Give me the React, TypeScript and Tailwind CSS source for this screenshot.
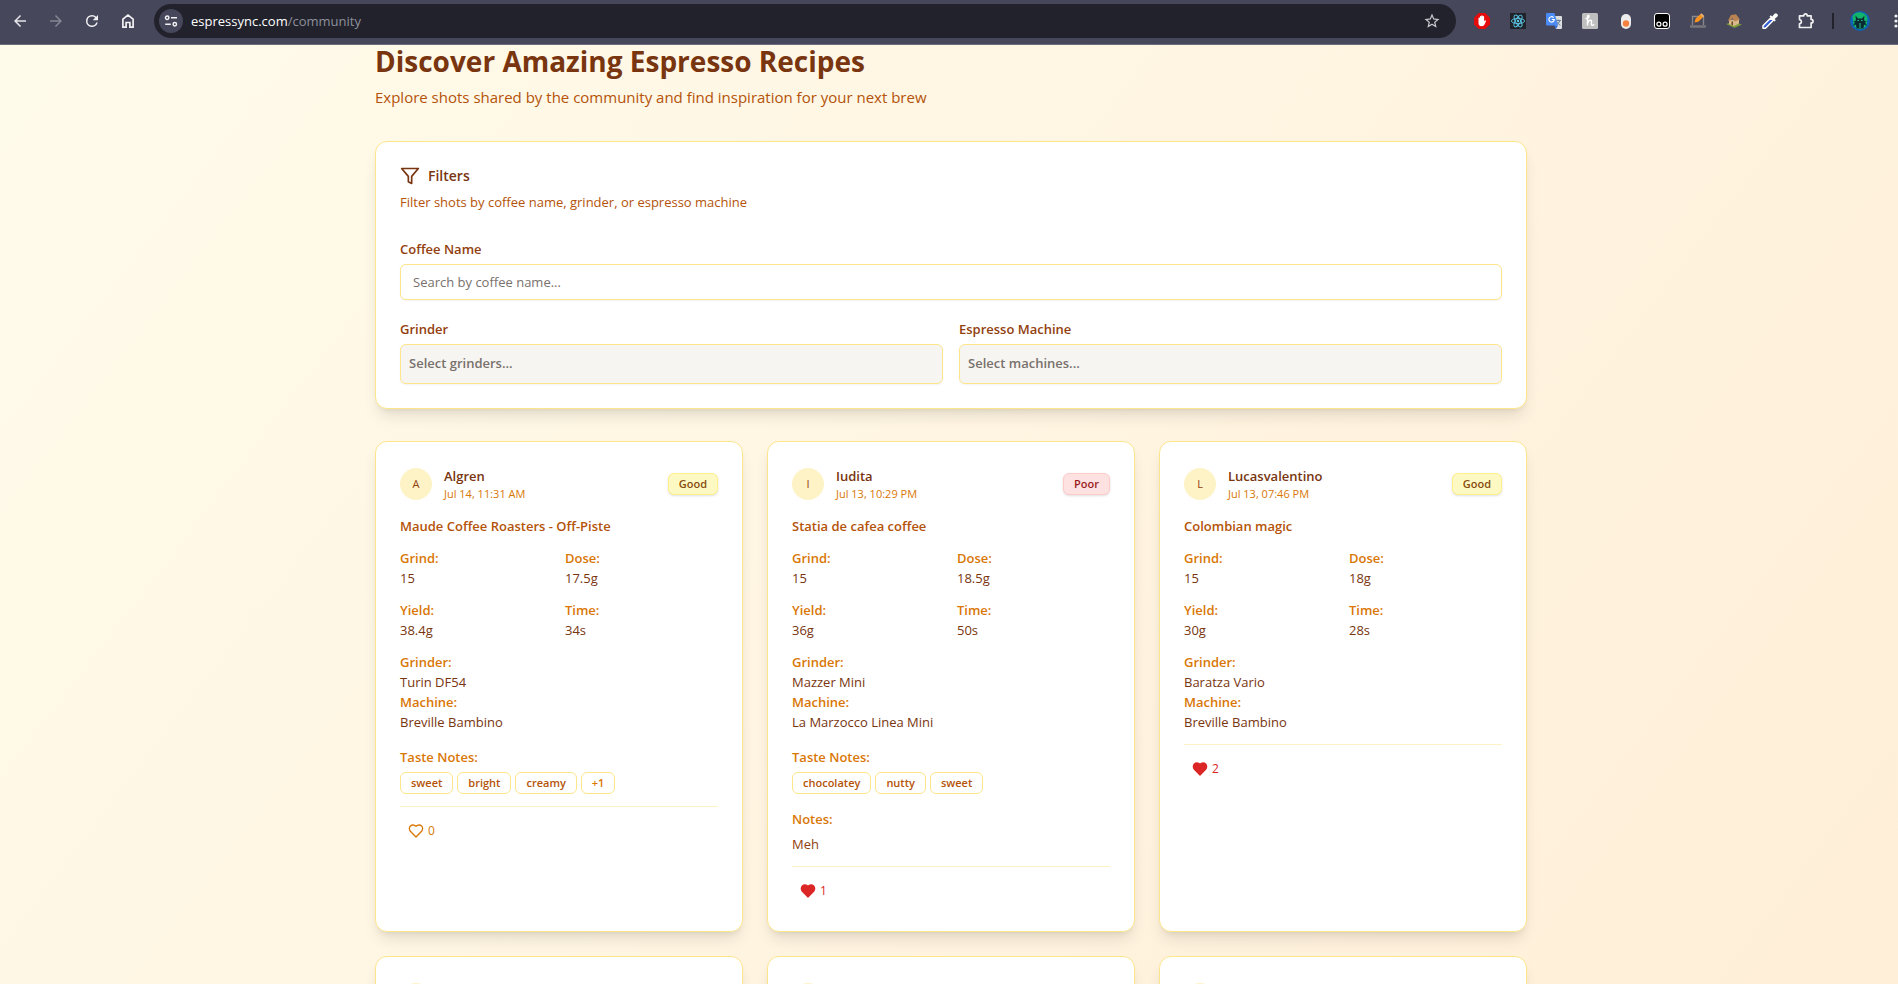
import { useState } from "react";
import type { ReactNode } from "react";

type Shot = {
  user: string;
  date: string;
  rating: "Good" | "Poor";
  coffee: string;
  stats: [string, string][];
  gear: [string, string][];
  tastes: string[];
  more?: string;
  notes?: string;
  likes: number;
  liked: boolean;
};

const shots: Shot[] = [
  {
    user: "Algren",
    date: "Jul 14, 11:31 AM",
    rating: "Good",
    coffee: "Maude Coffee Roasters - Off-Piste",
    stats: [["Grind:", "15"], ["Dose:", "17.5g"], ["Yield:", "38.4g"], ["Time:", "34s"]],
    gear: [["Grinder:", "Turin DF54"], ["Machine:", "Breville Bambino"]],
    tastes: ["sweet", "bright", "creamy"],
    more: "+1",
    likes: 0,
    liked: false,
  },
  {
    user: "Iudita",
    date: "Jul 13, 10:29 PM",
    rating: "Poor",
    coffee: "Statia de cafea coffee",
    stats: [["Grind:", "15"], ["Dose:", "18.5g"], ["Yield:", "36g"], ["Time:", "50s"]],
    gear: [["Grinder:", "Mazzer Mini"], ["Machine:", "La Marzocco Linea Mini"]],
    tastes: ["chocolatey", "nutty", "sweet"],
    notes: "Meh",
    likes: 1,
    liked: true,
  },
  {
    user: "Lucasvalentino",
    date: "Jul 13, 07:46 PM",
    rating: "Good",
    coffee: "Colombian magic",
    stats: [["Grind:", "15"], ["Dose:", "18g"], ["Yield:", "30g"], ["Time:", "28s"]],
    gear: [["Grinder:", "Baratza Vario"], ["Machine:", "Breville Bambino"]],
    tastes: [],
    likes: 2,
    liked: true,
  },
];

const loadingCards = [1, 2, 3, 4, 5, 6, 7, 8, 9];

const ratingStyles = {
  Good: "border-[#fef08a] bg-[#fef9c3] text-[#854d0e]",
  Poor: "border-[#fecaca] bg-[#fee2e2] text-[#991b1b]",
};

function BarButton({ label, children }: { label: string; children: ReactNode }) {
  return (
    <button type="button" aria-label={label} className="flex h-9 w-9 shrink-0 items-center justify-center">
      {children}
    </button>
  );
}

function BrowserBar() {
  return (
    <header className="shrink-0 overflow-hidden border-b border-[#6b6c7e] bg-[#46475a]">
      <div className="-mr-4 flex h-11 items-center pb-0.5 pl-0.5">
        <BarButton label="Back">
          <svg viewBox="0 0 24 24" className="h-[18px] w-[18px] fill-[#e6e6ea]">
            <path d="M20 11H7.83l5.59-5.59L12 4l-8 8 8 8 1.41-1.41L7.83 13H20v-2z" />
          </svg>
        </BarButton>
        <BarButton label="Forward">
          <svg viewBox="0 0 24 24" className="h-[18px] w-[18px] fill-[#858693]">
            <path d="M4 11h12.17l-5.59-5.59L12 4l8 8-8 8-1.41-1.41L16.17 13H4v-2z" />
          </svg>
        </BarButton>
        <BarButton label="Reload">
          <svg viewBox="0 0 24 24" className="h-[18px] w-[18px] fill-[#f1f1f3]">
            <path d="M17.65 6.35A7.96 7.96 0 0 0 12 4a8 8 0 1 0 7.73 10h-2.08A6 6 0 1 1 12 6c1.66 0 3.14.69 4.22 1.78L13 11h7V4l-2.35 2.35z" />
          </svg>
        </BarButton>
        <BarButton label="Home">
          <svg viewBox="0 0 18 18" className="h-[18px] w-[18px] fill-none stroke-[#f1f1f3]" strokeWidth="1.7">
            <path d="M3.9 15.1V7.2L9 3.1l5.1 4.1v7.9h-3.2v-4.6H7.1v4.6Z" />
          </svg>
        </BarButton>
        <div className="ml-2 mr-2 flex h-[34px] min-w-0 flex-1 items-center rounded-full bg-[#22222c] pl-[5px] pr-[15px]">
          <button
            type="button"
            aria-label="Site information"
            className="flex h-6 w-6 shrink-0 items-center justify-center rounded-full bg-[#46475a]"
          >
            <svg viewBox="0 0 16 16" className="h-4 w-4 fill-none stroke-[#f1f1f3]" strokeWidth="1.5">
              <circle cx="4.2" cy="4.8" r="1.7" />
              <path d="M8 4.8h6M2.2 11.2h5.6" />
              <circle cx="11.8" cy="11.2" r="1.7" />
            </svg>
          </button>
          <p className="min-w-0 flex-1 truncate pl-2 text-[13px] leading-5 text-[#8f909b]">
            <span className="text-white">espressync.com</span>/community
          </p>
          <button type="button" aria-label="Bookmark this page" className="flex h-[18px] w-[18px] items-center justify-center">
            <svg viewBox="0 0 24 24" className="h-[18px] w-[18px] fill-[#c9c9cf]">
              <path d="M22 9.24l-7.19-.62L12 2 9.19 8.63 2 9.24l5.46 4.73L5.82 21 12 17.27 18.18 21l-1.63-7.03L22 9.24zM12 15.4l-3.76 2.27 1-4.28-3.32-2.88 4.38-.38L12 6.1l1.71 4.04 4.38.38-3.32 2.88 1 4.28L12 15.4z" />
            </svg>
          </button>
        </div>
        <BarButton label="Ad blocker">
          <svg viewBox="0 0 16 16" className="h-4 w-4">
            <path d="M4.7 0h6.6L16 4.7v6.6L11.3 16H4.7L0 11.3V4.7Z" fill="#e40d0d" />
            <path
              d="M4.5 8.2V5.2a.7.7 0 0 1 1.4 0V3.600a.7.7 0 0 1 1.4 0V2.900a.7.7 0 0 1 1.4 0v.8a.7.7 0 0 1 1.4 0v4.8l.6-1a.8.8 0 0 1 1.3.8l-1.5 3.2c-.6 1.2-1.4 1.7-2.8 1.7-2 0-3.2-1.2-3.2-3Z"
              fill="#fff"
            />
          </svg>
        </BarButton>
        <BarButton label="React tools">
          <svg viewBox="0 0 16 16" className="h-4 w-4 fill-none stroke-[#5cc8e8]" strokeWidth="0.9">
            <path d="M0 0h16v16H0Z" fill="#20232a" stroke="none" />
            <ellipse cx="8" cy="8" rx="6.6" ry="2.6" />
            <ellipse cx="8" cy="8" rx="6.6" ry="2.6" transform="rotate(60 8 8)" />
            <ellipse cx="8" cy="8" rx="6.6" ry="2.6" transform="rotate(120 8 8)" />
            <circle cx="8" cy="8" r="1.2" fill="#5cc8e8" stroke="none" />
          </svg>
        </BarButton>
        <BarButton label="Translate">
          <svg viewBox="0 0 16 16" className="h-4 w-4">
            <path d="M6 3h9a1 1 0 0 1 1 1v11a1 1 0 0 1-1 1h-5Z" fill="#dcdde0" />
            <path d="M9.5 7.5h5.5M12.2 6.5v1M13.8 7.5c-.4 2-2 3.6-3.8 4.5M10.8 8.5c.6 1.6 2 3 3.6 3.8" stroke="#5f7f95" fill="none" />
            <path d="M1 0h7.5l3.5 12.5H1a1 1 0 0 1-1-1V1a1 1 0 0 1 1-1Z" fill="#4a8af4" />
            <path d="m8 12.5 4 0L10 16Z" fill="#3367d6" />
            <path d="M7.6 4.6A2.7 2.7 0 1 0 8.3 6.500H5.8" stroke="#fff" strokeWidth="1.2" fill="none" />
          </svg>
        </BarButton>
        <BarButton label="Coupons">
          <svg viewBox="0 0 16 16" className="h-4 w-4">
            <rect width="16" height="16" rx="1.5" fill="#bfbfbf" />
            <path
              d="M4 5.5c1.5 0 3-1 3-2.3 0-1.2-1.5-1-1.5.8v8.5c0-3 1.2-5.3 2.9-5.3 2.2 0 .6 3 .9 4.3.3 1.2 1.6 1 2.5.1"
              stroke="#fff"
              strokeWidth="1.4"
              fill="none"
              strokeLinecap="round"
            />
          </svg>
        </BarButton>
        <BarButton label="Capsule">
          <svg viewBox="0 0 16 16" className="h-4 w-4">
            <rect x="3" y="1" width="10" height="15" rx="5" fill="#ececec" />
            <circle cx="8" cy="10.5" r="3.2" fill="#f5813f" />
          </svg>
        </BarButton>
        <BarButton label="Script manager">
          <svg viewBox="0 0 16 16" className="h-4 w-4 fill-none stroke-white">
            <rect x="0.5" y="0.5" width="15" height="15" rx="2.5" fill="#000" />
            <circle cx="4.9" cy="11.2" r="2" strokeWidth="1.2" />
            <circle cx="11.1" cy="11.2" r="2" strokeWidth="1.2" />
          </svg>
        </BarButton>
        <BarButton label="Page editor">
          <svg viewBox="0 0 16 16" className="h-4 w-4">
            <path d="M2.5 12V3.500h11V12" stroke="#8a8a8e" strokeWidth="1.3" fill="none" />
            <path d="M0 12.3h16v1.5a1 1 0 0 1-1 1H1a1 1 0 0 1-1-1Z" fill="#77777b" />
            <path d="m4.500 9.500 1-3.700L10 1.500l3 2.800-4.700 4.400Z" fill="#f7931e" />
            <path d="m10 1.500 1.500-1.200 2.800 2.700L13 4.300Z" fill="#f2b36a" />
          </svg>
        </BarButton>
        <BarButton label="Cottage">
          <svg viewBox="0 0 16 16" className="h-4 w-4">
            <path d="m0 11 7-2 9 2.5L8.500 15Z" fill="#7f9a3b" />
            <path d="M3 7v4l5 2 5-2.500V6Z" fill="#d9b98a" />
            <path d="M2 7.500 5 2l5-.8 4 5.300-5.500 2L6.500 5 4 8Z" fill="#b98352" />
            <path d="M5.500 8.500h1.500v3.800l-1.500-.6Z" fill="#6d4527" />
          </svg>
        </BarButton>
        <BarButton label="Colour picker">
          <svg viewBox="0 0 16 16" className="h-4 w-4">
            <path d="M1 15.200v-2.500L8.700 5l2.500 2.500-7.700 7.700Z" fill="#2f5bd0" stroke="#fff" strokeWidth="1.5" strokeLinejoin="round" />
            <path d="m7.500 3.500 1.300-1.300 1.400 1.300L12.300.9a2 2 0 0 1 2.900 2.900l-2.600 2.100 1.200 1.300-1.300 1.300Z" fill="#fff" />
          </svg>
        </BarButton>
        <BarButton label="Extensions">
          <svg viewBox="0 0 18 18" className="h-[18px] w-[18px] fill-none stroke-[#f1f1f3]" strokeWidth="1.7" strokeLinejoin="round">
            <path d="M2.500 3.800h4.300c0-2.600 3.400-2.600 3.400 0h3.900v3.600c2.600 0 2.600 3.500 0 3.500v4.600H2.500v-3.700c2.600-.5 2.600-3.700 0-4.200Z" />
          </svg>
        </BarButton>
        <div className="flex w-[18px] shrink-0 justify-center">
          <span className="h-4 w-0.5 bg-[#22222c]" />
        </div>
        <BarButton label="Profile">
          <svg viewBox="0 0 20 20" className="h-5 w-5">
            <circle cx="10" cy="10" r="10" fill="#0d62b8" />
            <path d="M2.500 5.500C4 2 8 .8 11 1.500c4 .8 6.500 3.500 6.500 6.500l-1 7-4 3h-5l-4-3Z" fill="#12b36b" />
            <path d="m5.500 4.500 2.500 3h4l2.500-3-.5 5 3 1-2 .5 2 4-3-1.500-.5 4h-7l-.5-4-3 1.500 2-4-2-.5 3-1Z" fill="#0c2a33" />
            <path d="M7.500 9.500h1.500M11 9.500h1.500M10 12v5" stroke="#2bc58a" />
          </svg>
        </BarButton>
        <BarButton label="Menu">
          <svg viewBox="0 0 18 18" className="h-[18px] w-[18px] fill-[#f1f1f3]">
            <circle cx="9" cy="4" r="1.6" />
            <circle cx="9" cy="9" r="1.6" />
            <circle cx="9" cy="14" r="1.6" />
          </svg>
        </BarButton>
      </div>
    </header>
  );
}

function PickerField({ id, label, placeholder }: { id: string; label: string; placeholder: string }) {
  return (
    <div>
      <label htmlFor={id} className="mb-0.5 block text-[13px] font-semibold leading-[26px] text-[#92400e]">
        {label}
      </label>
      <select
        id={id}
        className="block h-10 w-full appearance-none rounded-md border border-[#fde68a] bg-[#f7f5f2] px-2 text-[13px] font-semibold text-[#78716c] shadow-xs"
      >
        <option>{placeholder}</option>
      </select>
    </div>
  );
}

function Filters() {
  return (
    <section className="rounded-xl border border-[#fde68a] bg-white p-6 shadow-lg">
      <h2 className="flex items-center gap-2 text-sm font-semibold leading-5 text-[#78350f]">
        <svg
          viewBox="0 0 24 24"
          className="h-5 w-5 fill-none stroke-current"
          strokeWidth="2"
          strokeLinecap="round"
          strokeLinejoin="round"
        >
          <polygon points="22 3 2 3 10 12.46 10 19 14 21 14 12.46 22 3" />
        </svg>
        Filters
      </h2>
      <p className="mt-1.5 text-[13px] leading-5 text-[#b45309]">
        Filter shots by coffee name, grinder, or espresso machine
      </p>
      <div className="mt-6">
        <label htmlFor="coffee" className="mb-0.5 block text-[13px] font-semibold leading-[26px] text-[#92400e]">
          Coffee Name
        </label>
        <input
          id="coffee"
          type="text"
          placeholder="Search by coffee name..."
          className="block h-9 w-full rounded-md border border-[#fde68a] bg-white px-3 text-[13px] shadow-xs placeholder:text-[#78716c]"
        />
      </div>
      <div className="mt-4 grid grid-cols-2 gap-4">
        <PickerField id="grinder" label="Grinder" placeholder="Select grinders..." />
        <PickerField id="machine" label="Espresso Machine" placeholder="Select machines..." />
      </div>
    </section>
  );
}

function LikeButton({ count, initial }: { count: number; initial: boolean }) {
  const [liked, setLiked] = useState(initial);
  const total = count + (liked === initial ? 0 : liked ? 1 : -1);
  return (
    <button
      type="button"
      onClick={() => setLiked(!liked)}
      className={
        liked
          ? "flex h-8 items-center gap-1 px-2 text-xs font-medium text-[#dc2626]"
          : "flex h-8 items-center gap-1 px-2 text-xs font-medium text-[#d97706]"
      }
    >
      <svg
        viewBox="0 0 24 24"
        className={liked ? "h-4 w-4 fill-current stroke-current" : "h-4 w-4 fill-none stroke-current"}
        strokeWidth="2"
        strokeLinecap="round"
        strokeLinejoin="round"
      >
        <path d="M19 14c1.49-1.46 3-3.21 3-5.5A5.5 5.5 0 0 0 16.5 3c-1.76 0-3 .5-4.5 2-1.5-1.5-2.74-2-4.5-2A5.5 5.5 0 0 0 2 8.5c0 2.3 1.5 4.05 3 5.5l7 7Z" />
      </svg>
      {total}
    </button>
  );
}

function ShotCard({ shot }: { shot: Shot }) {
  return (
    <article className="rounded-xl border border-[#fde68a] bg-white p-6 text-[13px] leading-5 text-[#78350f] shadow-lg">
      <div className="flex items-center gap-3">
        <span className="flex h-8 w-8 items-center justify-center rounded-full bg-[#fef3c7] text-[11px] text-[#92400e]">
          {shot.user[0]}
        </span>
        <div className="min-w-0 flex-1">
          <h3 className="font-semibold">{shot.user}</h3>
          <p className="text-[11px] leading-4 text-[#d97706]">{shot.date}</p>
        </div>
        <span className={`rounded-md border px-2.5 py-0.5 text-[11px] font-semibold leading-4 shadow-sm ${ratingStyles[shot.rating]}`}>
          {shot.rating}
        </span>
      </div>
      <h4 className="mt-3.5 font-semibold text-[#b45309]">{shot.coffee}</h4>
      <dl className="mt-3 grid grid-cols-2 gap-3">
        {shot.stats.map(([name, value]) => (
          <div key={name}>
            <dt className="font-semibold text-[#d97706]">{name}</dt>
            <dd>{value}</dd>
          </div>
        ))}
      </dl>
      <dl className="mt-3">
        {shot.gear.map(([name, value]) => (
          <div key={name}>
            <dt className="font-semibold text-[#d97706]">{name}</dt>
            <dd>{value}</dd>
          </div>
        ))}
      </dl>
      {shot.tastes.length > 0 && (
        <div className="mt-3">
          <h5 className="mb-0.5 font-semibold leading-[26px] text-[#d97706]">Taste Notes:</h5>
          <ul className="flex flex-wrap gap-1 text-[11px] font-semibold leading-4 text-[#b45309]">
            {shot.tastes.map((taste) => (
              <li key={taste} className="rounded-md border border-[#fde68a] px-2.5 py-0.5">
                {taste}
              </li>
            ))}
            {shot.more && (
              <li className="rounded-md border border-[#fde68a] px-2.5 py-0.5 text-[#d97706]">{shot.more}</li>
            )}
          </ul>
        </div>
      )}
      {shot.notes && (
        <div className="mt-3">
          <h5 className="mb-0.5 font-semibold leading-[26px] text-[#d97706]">Notes:</h5>
          <p className="text-[#92400e]">{shot.notes}</p>
        </div>
      )}
      <div className="mt-3 border-t border-[#fef3c7] pt-2">
        <LikeButton count={shot.likes} initial={shot.liked} />
      </div>
    </article>
  );
}

function LoadingCard() {
  return (
    <div className="h-[491px] rounded-xl border border-[#fde68a] bg-white p-6 shadow-lg">
      <div className="flex h-9 items-center">
        <span className="h-8 w-8 rounded-full bg-[#fef3c7]" />
      </div>
    </div>
  );
}

export default function App() {
  return (
    <div className="flex h-screen flex-col overflow-hidden font-['Segoe_UI','Open_Sans',sans-serif]">
      <BrowserBar />
      <div className="min-h-0 flex-1 overflow-y-auto [scrollbar-width:none]">
        <main className="bg-linear-to-br from-[#fffbeb] to-[#ffe9cf] pb-8 pl-1">
          <div className="mx-auto max-w-6xl">
            <h1 className="text-[28px] font-bold leading-8 text-[#78350f]">Discover Amazing Espresso Recipes</h1>
            <p className="mt-2 text-[15px] leading-6 text-[#b45309]">
              Explore shots shared by the community and find inspiration for your next brew
            </p>
            <div className="mt-8">
              <Filters />
            </div>
            <div className="mt-8 grid grid-cols-3 gap-6">
              {shots.map((shot) => (
                <ShotCard key={shot.user} shot={shot} />
              ))}
              {loadingCards.map((card) => (
                <LoadingCard key={card} />
              ))}
            </div>
          </div>
        </main>
      </div>
    </div>
  );
}
